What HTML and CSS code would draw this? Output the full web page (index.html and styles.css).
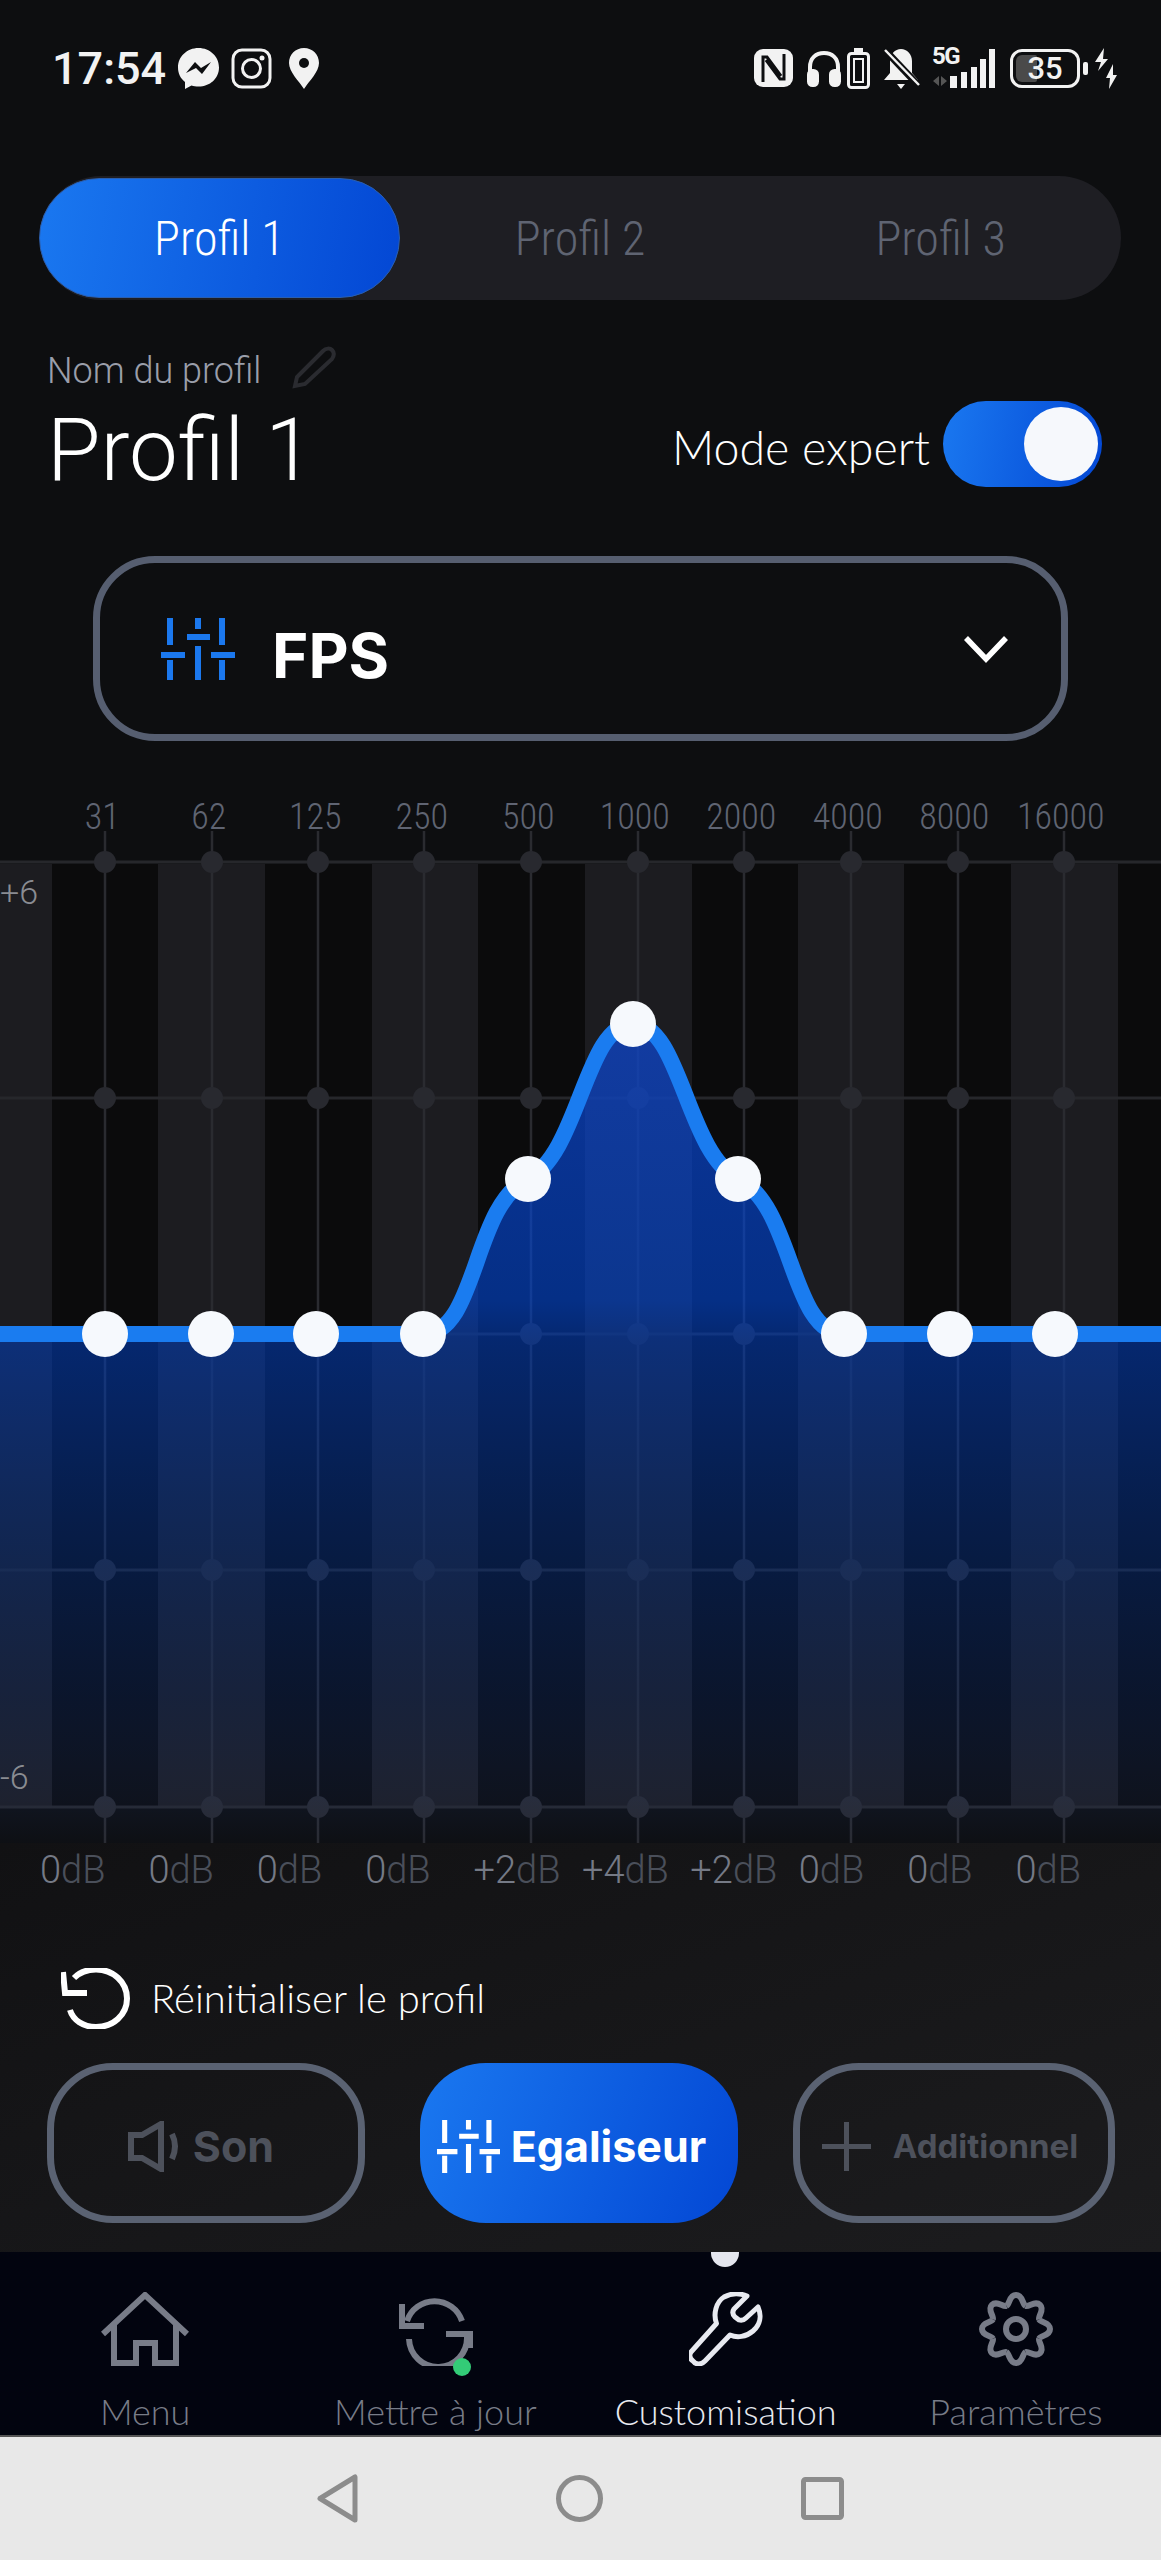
FILE: index.html
```html
<!DOCTYPE html>
<html lang="fr">
  <head>
    <meta charset="UTF-8" />
    <title>Egaliseur</title>
    <link rel="stylesheet" href="styles.css">
  </head>
  <body>
    <svg class="defs" width="0" height="0">
      <symbol id="sliders" viewBox="0 0 74 62">
        <path d="M9 0V27M9 42V62M0 37H24M37 0V11M37 28V62M26 19H49M61 0V27M61 42V62M50 37H74" fill="none" stroke="currentColor" stroke-width="6" />
      </symbol>
    </svg>

    <header class="status">
      <div class="status_left">
        <span class="time">17:54</span>
        <svg class="ic" width="41" height="41" viewBox="0 0 41 41"><path d="M20.500 0C9 0 0 8.500 0 19.500C0 25.500 2.500 30.500 7 34V41L13.500 37.500C15.500 38.200 18 38.500 20.500 38.500C32 38.500 41 30.500 41 19.500C41 8.500 32 0 20.500 0Z" fill="#f2f2f2"/><path d="M8 25L17 14L23 20L33 14L24 26L18 20Z" fill="#0d0e10"/></svg>
        <svg class="ic insta" width="41" height="41" viewBox="0 0 41 41"><rect x="2" y="2" width="37" height="37" rx="9" fill="none" stroke="#f2f2f2" stroke-width="3"/><circle cx="20.500" cy="20.500" r="9" fill="none" stroke="#f2f2f2" stroke-width="3"/><circle cx="31" cy="10" r="2.500" fill="#f2f2f2"/></svg>
        <svg class="ic" width="30" height="41" viewBox="0 0 30 41"><path d="M15 0C6.500 0 0 6.500 0 15C0 24 10 33 15 41C20 33 30 24 30 15C30 6.500 23.500 0 15 0Z" fill="#f2f2f2"/><circle cx="15" cy="15" r="5" fill="#0d0e10"/></svg>
      </div>
      <div class="status_right">
        <svg class="ic nfc" width="39" height="38" viewBox="0 0 39 38"><rect width="39" height="38" rx="9" fill="#f2f2f2"/><path d="M9 33V8H13L27 27M30 5V30H26L12 11" fill="none" stroke="#0d0e10" stroke-width="3"/></svg>
        <svg class="ic head" width="34" height="37" viewBox="0 0 34 37"><path d="M3 24V17C3 8 9 3 17 3C25 3 31 8 31 17V24" fill="none" stroke="#f2f2f2" stroke-width="4"/><rect x="0" y="19" width="12" height="18" rx="5.500" fill="#f2f2f2"/><rect x="22" y="19" width="12" height="18" rx="5.500" fill="#f2f2f2"/></svg>
        <svg class="ic bat" width="23" height="41" viewBox="0 0 23 41"><rect x="7" y="0" width="9" height="4" fill="#f2f2f2"/><rect x="1.500" y="5.500" width="20" height="34" rx="3" fill="none" stroke="#f2f2f2" stroke-width="3"/><rect x="7" y="11" width="9" height="23" fill="none" stroke="#f2f2f2" stroke-width="2"/></svg>
        <svg class="ic bell" width="37" height="41" viewBox="0 0 37 41"><path d="M18 1C24 1 29 6 29 13V25L35 32H1L7 25V13C7 6 12 1 18 1Z" fill="#f2f2f2"/><path d="M14 36H22L18 41Z" fill="#f2f2f2"/><path d="M1 1L36 38" stroke="#0d0e10" stroke-width="7"/><path d="M2 2L36 37" stroke="#f2f2f2" stroke-width="2.500"/></svg>
        <div class="net">
          <span class="five_g">5G</span>
          <svg class="ic" width="63" height="39" viewBox="0 0 63 39"><path d="M1 32L7 27V37ZM15 32L9 27V37Z" fill="#555"/><path d="M18 27H25V39H18ZM29 23H35V39H29ZM39 18H45V39H39ZM48 10H54V39H48ZM57 0H63V39H57Z" fill="#f2f2f2"/></svg>
        </div>
        <div class="battery"><span class="battery_fill"></span><span class="battery_num">35</span></div>
        <span class="battery_nub"></span>
        <svg class="ic" width="22" height="41" viewBox="0 0 22 41"><path d="M9 0L0 14H6L3 23L13 11H8ZM18 16L11 30H15L14 41L22 27H18Z" fill="#f2f2f2"/></svg>
      </div>
    </header>

    <nav class="tabs">
      <a class="tab tab_on">Profil 1</a>
      <a class="tab">Profil 2</a>
      <a class="tab">Profil 3</a>
    </nav>

    <section class="profile">
      <div>
        <div class="profile_label">
          <span>Nom du profil</span>
          <svg class="pencil" width="44" height="44" viewBox="0 0 44 44"><path d="M3 41L5 32L31 6C34 3 38 3 40 5C43 8 42 11 40 14L13 39Z" fill="none" stroke="#2a2b30" stroke-width="4"/></svg>
        </div>
        <h1 class="profile_name">Profil 1</h1>
      </div>
      <div class="expert">
        <span class="expert_text">Mode expert</span>
        <span class="toggle"><span class="knob"></span></span>
      </div>
    </section>

    <div class="preset">
      <svg class="preset_icon" width="74" height="62"><use href="#sliders" /></svg>
      <span class="preset_name">FPS</span>
      <svg class="chevron" width="46" height="28" viewBox="0 0 46 28"><path d="M3 3L23 24L43 3" fill="none" stroke="#fff" stroke-width="5.500"/></svg>
    </div>

    <div class="freqs">
      <span>31</span><span>62</span><span>125</span><span>250</span><span>500</span>
      <span>1000</span><span>2000</span><span>4000</span><span>8000</span><span>16000</span>
    </div>

    <div class="graph">
      <svg class="curve" width="1161" height="1012" viewBox="0 831 1161 1012">
        <defs>
          <linearGradient id="fade" x1="0" y1="1024" x2="0" y2="1843" gradientUnits="userSpaceOnUse">
            <stop offset="0" stop-color="#0e49d9" stop-opacity="0.7" />
            <stop offset="0.338" stop-color="#0049de" stop-opacity="0.58" />
            <stop offset="0.386" stop-color="#0040c4" stop-opacity="0.54" />
            <stop offset="0.642" stop-color="#00369f" stop-opacity="0.38" />
            <stop offset="0.825" stop-color="#0a3286" stop-opacity="0.26" />
            <stop offset="0.947" stop-color="#254696" stop-opacity="0.13" />
            <stop offset="1" stop-color="#254696" stop-opacity="0.03" />
          </linearGradient>
          <g id="col">
            <line class="vline" x1="105" y1="831" x2="105" y2="1843" />
            <circle class="node" cx="105" cy="862" r="11" />
            <circle class="node" cx="105" cy="1098" r="11" />
            <circle class="node" cx="105" cy="1334" r="11" />
            <circle class="node" cx="105" cy="1570" r="11" />
            <circle class="node" cx="105" cy="1807" r="11" />
          </g>
        </defs>
        <rect class="stripe_dark" x="0" y="864" width="1161" height="942" />
        <rect class="stripe" x="0" y="864" width="52" height="942" />
        <rect class="stripe" x="158" y="864" width="107" height="942" />
        <rect class="stripe" x="372" y="864" width="106" height="942" />
        <rect class="stripe" x="585" y="864" width="107" height="942" />
        <rect class="stripe" x="798" y="864" width="106" height="942" />
        <rect class="stripe" x="1011" y="864" width="107" height="942" />
        <line class="hline" x1="0" y1="862" x2="1161" y2="862" />
        <line class="hline" x1="0" y1="1098" x2="1161" y2="1098" />
        <line class="hline" x1="0" y1="1334" x2="1161" y2="1334" />
        <line class="hline" x1="0" y1="1570" x2="1161" y2="1570" />
        <line class="hline" x1="0" y1="1807" x2="1161" y2="1807" />
        <use href="#col" />
        <use href="#col" x="107" />
        <use href="#col" x="213" />
        <use href="#col" x="319" />
        <use href="#col" x="426" />
        <use href="#col" x="533" />
        <use href="#col" x="639" />
        <use href="#col" x="746" />
        <use href="#col" x="853" />
        <use href="#col" x="959" />
        <path fill="url(#fade)" d="M0 1334H423C478 1334 472 1205 528 1179C580 1152 585 1024 633 1024C681 1024 686 1152 738 1179C794 1205 790 1334 844 1334H1161V1843H0Z" />
        <path class="line" d="M0 1334H423C478 1334 472 1205 528 1179C580 1152 585 1024 633 1024C681 1024 686 1152 738 1179C794 1205 790 1334 844 1334H1161" />
        <circle class="dot" cx="105" cy="1334" r="23" />
        <circle class="dot" cx="211" cy="1334" r="23" />
        <circle class="dot" cx="316" cy="1334" r="23" />
        <circle class="dot" cx="423" cy="1334" r="23" />
        <circle class="dot" cx="528" cy="1179" r="23" />
        <circle class="dot" cx="633" cy="1024" r="23" />
        <circle class="dot" cx="738" cy="1179" r="23" />
        <circle class="dot" cx="844" cy="1334" r="23" />
        <circle class="dot" cx="950" cy="1334" r="23" />
        <circle class="dot" cx="1055" cy="1334" r="23" />
      </svg>
      <span class="limit limit_top">+6</span>
      <span class="limit limit_bottom">-6</span>
    </div>

    <section class="lower">
      <div class="gains">
        <span><b>0</b>dB</span><span><b>0</b>dB</span><span><b>0</b>dB</span><span><b>0</b>dB</span><span><b>+2</b>dB</span>
        <span><b>+4</b>dB</span><span><b>+2</b>dB</span><span><b>0</b>dB</span><span><b>0</b>dB</span><span><b>0</b>dB</span>
      </div>
      <div class="reset">
        <svg width="69" height="61" viewBox="0 0 69 61"><path d="M13 10C19 4 26 1.500 35 1.500C52 1.500 66 14 66 30.500C66 47 52 59 35 59C22 59 12 52 9 42M2 4L4 25H26" fill="none" stroke="#fff" stroke-width="6"/></svg>
        <span>Réinitialiser le profil</span>
      </div>
      <div class="modes">
        <a class="mode mode_off mode_son">
          <svg width="54" height="51" viewBox="0 0 54 51"><path d="M3 14H14L33 3V48L14 37H3ZM44 13Q50 25 44 38" fill="none" stroke="currentColor" stroke-width="6"/></svg>
          <span>Son</span>
        </a>
        <a class="mode mode_on">
          <svg width="63" height="53"><use href="#sliders" /></svg>
          <span>Egaliseur</span>
        </a>
        <a class="mode mode_off mode_small">
          <svg width="49" height="49" viewBox="0 0 49 49"><path d="M24.500 0V49M0 24.500H49" fill="none" stroke="currentColor" stroke-width="5"/></svg>
          <span>Additionnel</span>
        </a>
      </div>
    </section>

    <nav class="menu">
      <span class="menu_mark"></span>
      <a class="menu_item">
        <svg width="88" height="74" viewBox="0 0 88 74"><path d="M2 42L44 3L86 42M13 32V71H35V51H54V71H75V32" fill="none" stroke="currentColor" stroke-width="6"/></svg>
        <span>Menu</span>
      </a>
      <a class="menu_item">
        <svg width="75" height="74" viewBox="0 -7 75 74"><path d="M9 22A29 29 0 0 1 64 22M4 5V27H26M11 40A28 28 0 0 0 69 38M48 35H72V49" fill="none" stroke="currentColor" stroke-width="6"/></svg>
        <span>Mettre à jour</span>
        <i class="menu_badge"></i>
      </a>
      <a class="menu_item menu_item_on">
        <svg width="74" height="74" viewBox="0 0 74 74"><path d="M2 60L27.500 31.500C24 22 27 10 35 5C42 1 51 1 58 4L45 17C43 20 44 23 46 25L50 28C53 29 55 28 57 26L69 15C73 24 71 33 64 39C57 45 48 46 41 43L16 69C12 73 7 73 4 69C0 66 0 63 2 60Z" fill="none" stroke="currentColor" stroke-width="5" stroke-linejoin="round"/></svg>
        <span>Customisation</span>
      </a>
      <a class="menu_item">
        <svg width="74" height="74" viewBox="0 0 74 74">
          <defs><path id="lobe" d="M27.400 13.900C31 12 30 3 37 3C44 3 43 12 46.600 13.900" fill="none" stroke="currentColor" stroke-width="6"/></defs>
          <use href="#lobe" /><use href="#lobe" transform="rotate(45 37 37)" /><use href="#lobe" transform="rotate(90 37 37)" /><use href="#lobe" transform="rotate(135 37 37)" />
          <use href="#lobe" transform="rotate(180 37 37)" /><use href="#lobe" transform="rotate(225 37 37)" /><use href="#lobe" transform="rotate(270 37 37)" /><use href="#lobe" transform="rotate(315 37 37)" />
          <circle cx="37" cy="37" r="10" fill="none" stroke="currentColor" stroke-width="6"/>
        </svg>
        <span>Paramètres</span>
      </a>
    </nav>

    <footer class="sysnav">
      <svg width="41" height="49" viewBox="0 0 41 49"><path d="M38 3V46L3 24.500Z" fill="none" stroke="#8c8c8c" stroke-width="5" stroke-linejoin="round"/></svg>
      <svg width="47" height="47" viewBox="0 0 47 47"><circle cx="23.500" cy="23.500" r="21" fill="none" stroke="#8c8c8c" stroke-width="5"/></svg>
      <svg width="43" height="43" viewBox="0 0 43 43"><rect x="2.500" y="2.500" width="38" height="38" rx="2" fill="none" stroke="#8c8c8c" stroke-width="5"/></svg>
    </footer>
  </body>
</html>
```

FILE: styles.css
```css
* {
  box-sizing: border-box;
}
body {
  margin: 0;
  width: 1161px;
  height: 2560px;
  overflow: hidden;
  background: #0d0e10;
  color: #fff;
  font-family: "Roboto", "Liberation Sans", sans-serif;
}
.defs {
  position: absolute;
}
.ic {
  display: block;
}

/* status bar */
.status {
  height: 136px;
  padding: 0 44px 0 52px;
  display: flex;
  align-items: center;
  justify-content: space-between;
}
.status_left,
.status_right {
  display: flex;
  align-items: center;
}
.time {
  font-size: 45px;
  font-weight: 500;
  color: #f2f2f2;
  margin-right: 12px;
}
.status_left .ic {
  margin-right: 12px;
}
.status_left .insta {
  margin-right: 17px;
}
.status_right .nfc {
  margin-right: 14px;
}
.status_right .head {
  margin-right: 6px;
}
.status_right .bat {
  margin-right: 13px;
}
.status_right .bell {
  margin-right: 12px;
}
.net {
  position: relative;
  margin-right: 15px;
}
.five_g {
  position: absolute;
  left: 0;
  top: -5px;
  font-size: 24px;
  line-height: 24px;
  font-weight: 700;
  letter-spacing: -1.5px;
  color: #f2f2f2;
}
.battery {
  position: relative;
  width: 70px;
  height: 39px;
  border: 3px solid #f2f2f2;
  border-radius: 12px;
  display: flex;
  align-items: center;
  justify-content: center;
  overflow: hidden;
}
.battery_fill {
  position: absolute;
  left: 3px;
  top: 3px;
  bottom: 3px;
  width: 33%;
  background: #4a4a4a;
  border-radius: 6px 2px 2px 6px;
}
.battery_num {
  position: relative;
  font-size: 31px;
  font-weight: 500;
  color: #f2f2f2;
}
.battery_nub {
  width: 5px;
  height: 13px;
  margin: 0 7px 0 3px;
  background: #f2f2f2;
  border-radius: 2px;
}

/* profile tabs */
.tabs {
  height: 124px;
  margin: 40px 40px 0 39px;
  background: #1e1e23;
  border-radius: 62px;
  display: grid;
  grid-template-columns: repeat(3, 1fr);
}
.tab {
  display: flex;
  align-items: center;
  justify-content: center;
  font-size: 48px;
  font-weight: 300;
  font-stretch: 87%;
  color: #5f6472;
}
.tab_on {
  margin: 2px 0;
  color: #fff;
  background: linear-gradient(100deg, #1a78f0, #0347d4);
  border-radius: 60px;
  border: 1px solid #2a5fb0;
}

.profile {
  height: 256px;
  padding: 47px 59px 0 47px;
  display: flex;
  justify-content: space-between;
}
.profile_label {
  display: flex;
  align-items: center;
  gap: 31px;
  font-size: 36px;
  font-weight: 300;
  color: #9a9eaa;
  height: 48px;
}
.pencil {
  margin-bottom: 8px;
}
.profile_name {
  margin: 3px 0 0;
  font-size: 87px;
  line-height: 104px;
  font-weight: 300;
  font-stretch: 90%;
}
.expert {
  display: flex;
  align-items: center;
  gap: 13px;
  height: 86px;
  margin-top: 54px;
  font-family: "Lato", sans-serif;
  font-size: 46.5px;
  font-weight: 300;
}
.expert_text {
  padding-top: 6px;
}
.toggle {
  width: 159px;
  height: 86px;
  border-radius: 43px;
  background: linear-gradient(100deg, #1a78f0, #0347d4);
  display: flex;
  align-items: center;
  justify-content: flex-end;
  padding-right: 4px;
}
.knob {
  width: 74px;
  height: 74px;
  border-radius: 50%;
  background: #f6f8fc;
}

.preset {
  height: 185px;
  margin: 0 93px;
  border: 7px solid #565e70;
  border-radius: 62px;
  display: flex;
  align-items: center;
  padding: 0 52px 0 61px;
}
.preset_icon {
  color: #1b78ee;
}
.preset_name {
  margin-left: 37px;
  padding-top: 14px;
  font-family: "Inter", sans-serif;
  font-size: 62px;
  font-weight: 700;
}
.chevron {
  margin-left: auto;
}

/* equalizer */
.freqs {
  height: 32px;
  margin-top: 58px;
  padding-left: 49px;
  display: grid;
  grid-template-columns: repeat(10, 106.5px);
  text-align: center;
  font-size: 36px;
  line-height: 36px;
  font-weight: 300;
  font-stretch: 78%;
  color: #5f6472;
}
.graph {
  position: relative;
  height: 1012px;
}
.curve {
  display: block;
}
.stripe_dark {
  fill: #0b0b0c;
}
.stripe {
  fill: #1c1c20;
}
.hline {
  stroke: #26272b;
  stroke-width: 3;
}
.vline {
  stroke: #2a2b30;
  stroke-width: 2.5;
}
.node {
  fill: #28292f;
}
.line {
  fill: none;
  stroke: #1a7cf0;
  stroke-width: 16;
}
.dot {
  fill: #f6f9fd;
}
.limit {
  position: absolute;
  left: 0;
  font-size: 34px;
  font-weight: 300;
  color: #8a8c92;
}
.limit_top {
  top: 41px;
}
.limit_bottom {
  top: 926px;
}

.lower {
  height: 409px;
  background: linear-gradient(160deg, #111113, #1c1c1e);
}
.gains {
  padding: 4px 0 0 40px;
  height: 62px;
  display: grid;
  grid-template-columns: repeat(10, 108.4px);
  font-size: 38px;
  line-height: 46px;
  font-weight: 300;
  color: #4a4f5a;
}
.gains b {
  font-weight: 300;
  color: #757a86;
}
.reset {
  margin-top: 63px;
  padding-left: 61px;
  display: flex;
  align-items: center;
  gap: 21px;
  font-family: "Lato", sans-serif;
  font-size: 40px;
  line-height: 61px;
  font-weight: 300;
}
.modes {
  margin-top: 34px;
  padding: 0 46px 0 47px;
  display: grid;
  grid-template-columns: 318px 318px 322px;
  justify-content: space-between;
}
.mode {
  height: 160px;
  padding: 6px 15px 0 0;
  border-radius: 66px;
  display: flex;
  align-items: center;
  justify-content: center;
  gap: 11px;
  font-family: "Inter", sans-serif;
  font-size: 43px;
  font-weight: 700;
}
.mode_off {
  border: 7px solid #5a6272;
  color: #4d515b;
}
.mode_on {
  color: #fff;
  background: linear-gradient(110deg, #1a78f0, #0347d4);
}
.mode_son {
  padding-right: 10px;
}
.mode_small {
  padding-right: 8px;
  gap: 22px;
  font-size: 33px;
}

/* bottom menu */
.menu {
  position: relative;
  height: 185px;
  background: #02040f;
  border-bottom: 2px solid #555;
  display: grid;
  grid-template-columns: repeat(4, 1fr);
  padding-top: 40px;
}
.menu_mark {
  position: absolute;
  left: 711px;
  top: 0;
  width: 28px;
  height: 15px;
  background: #e4e6ee;
  border-radius: 0 0 14px 14px;
}
.menu_item {
  position: relative;
  display: flex;
  flex-direction: column;
  align-items: center;
  gap: 25px;
  font-family: "Lato", sans-serif;
  font-size: 36px;
  font-weight: 300;
  line-height: 40px;
  color: #787c88;
}
.menu_item_on {
  color: #e8eaf0;
}
.menu_badge {
  position: absolute;
  left: 163px;
  top: 66px;
  width: 18px;
  height: 18px;
  border-radius: 50%;
  background: #33cc77;
}

.sysnav {
  height: 123px;
  background: #e8e8e8;
  display: grid;
  grid-template-columns: 41px 47px 43px;
  justify-content: center;
  column-gap: 198px;
  align-items: center;
}
```
